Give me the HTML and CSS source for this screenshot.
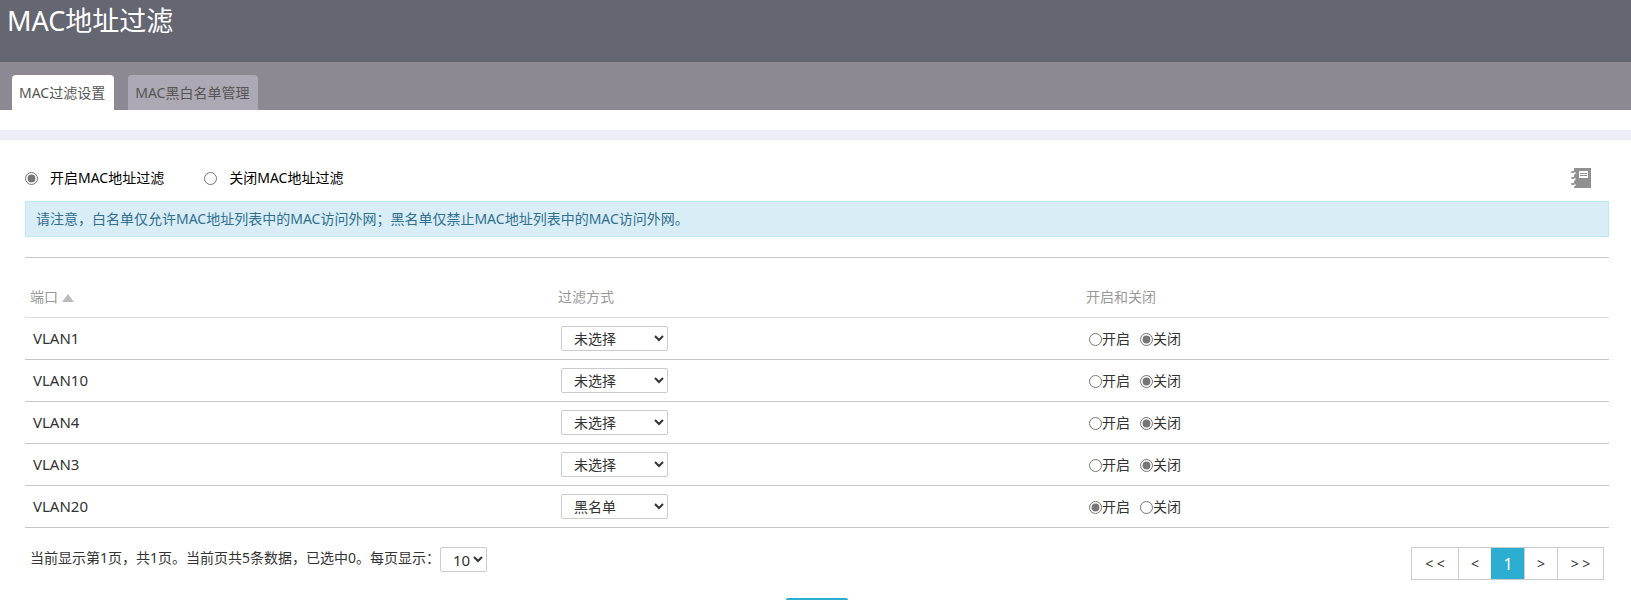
FILE: index.html
```
<!DOCTYPE html>
<html lang="zh-CN">
<head>
    <meta charset="UTF-8">
    <meta name="viewport" content="width=device-width, initial-scale=1.0">
    <title>MAC地址过滤</title>
    <link rel="stylesheet" href="styles.css">
</head>
<body>
    <header class="page-header">
        <h1>MAC地址过滤</h1>
    </header>
    <nav class="tabs">
        <a href="#" class="tab active">MAC过滤设置</a>
        <a href="#" class="tab">MAC黑白名单管理</a>
    </nav>
    <main class="content">
        <div class="toolbar">
            <label class="switch"><input type="radio" name="macFilter" checked>开启MAC地址过滤</label>
            <label class="switch"><input type="radio" name="macFilter">关闭MAC地址过滤</label>
            <button type="button" class="help-btn" aria-label="帮助">
                <svg width="20" height="20" viewBox="0 0 20 20">
                    <path fill="#909090" d="M3 0h17v20H3v-1l2-2-2-2v-2l2-2-2-2V7l2-2-2-2z"/>
                    <g fill="#909090">
                        <ellipse cx="2" cy="4" rx="2" ry="1"/>
                        <ellipse cx="2" cy="10" rx="2" ry="1"/>
                        <ellipse cx="2" cy="16" rx="2" ry="1"/>
                    </g>
                    <path fill="#fff" d="M8 3h9v7H8z"/>
                    <path fill="#909090" d="M9 5h7v1H9zM9 7h7v1H9z"/>
                </svg>
            </button>
        </div>
        <div class="notice">请注意，白名单仅允许MAC地址列表中的MAC访问外网；黑名单仅禁止MAC地址列表中的MAC访问外网。</div>
        <table class="port-table">
            <thead>
                <tr>
                    <th>端口<span class="sort-up"></span></th>
                    <th>过滤方式</th>
                    <th>开启和关闭</th>
                </tr>
            </thead>
            <tbody>
                <tr>
                    <td>VLAN1</td>
                    <td><select class="mode" aria-label="VLAN1 过滤方式"><option>未选择</option><option>白名单</option><option>黑名单</option></select></td>
                    <td><div class="radios"><label><input type="radio" name="vlan1">开启</label><label><input type="radio" name="vlan1" checked>关闭</label></div></td>
                </tr>
                <tr>
                    <td>VLAN10</td>
                    <td><select class="mode" aria-label="VLAN10 过滤方式"><option>未选择</option><option>白名单</option><option>黑名单</option></select></td>
                    <td><div class="radios"><label><input type="radio" name="vlan10">开启</label><label><input type="radio" name="vlan10" checked>关闭</label></div></td>
                </tr>
                <tr>
                    <td>VLAN4</td>
                    <td><select class="mode" aria-label="VLAN4 过滤方式"><option>未选择</option><option>白名单</option><option>黑名单</option></select></td>
                    <td><div class="radios"><label><input type="radio" name="vlan4">开启</label><label><input type="radio" name="vlan4" checked>关闭</label></div></td>
                </tr>
                <tr>
                    <td>VLAN3</td>
                    <td><select class="mode" aria-label="VLAN3 过滤方式"><option>未选择</option><option>白名单</option><option>黑名单</option></select></td>
                    <td><div class="radios"><label><input type="radio" name="vlan3">开启</label><label><input type="radio" name="vlan3" checked>关闭</label></div></td>
                </tr>
                <tr>
                    <td>VLAN20</td>
                    <td><select class="mode" aria-label="VLAN20 过滤方式"><option>未选择</option><option>白名单</option><option selected>黑名单</option></select></td>
                    <td><div class="radios"><label><input type="radio" name="vlan20" checked>开启</label><label><input type="radio" name="vlan20">关闭</label></div></td>
                </tr>
            </tbody>
        </table>
        <div class="table-footer">
            <div class="page-info">
                <label for="pageSize">当前显示第1页，共1页。当前页共5条数据，已选中0。每页显示：</label>
                <select id="pageSize" class="page-size"><option>10</option><option>20</option><option>50</option></select>
            </div>
            <div class="pager">
                <button type="button" class="wide">&lt; &lt;</button>
                <button type="button">&lt;</button>
                <button type="button" class="current">1</button>
                <button type="button">&gt;</button>
                <button type="button" class="wide">&gt; &gt;</button>
            </div>
        </div>
        <div class="actions">
            <button type="button" class="btn" aria-label="保存"></button>
        </div>
    </main>
</body>
</html>
```

FILE: styles.css
```
* {
    box-sizing: border-box;
}
body {
    margin: 0;
    font-family: "Noto Sans", "Noto Sans CJK SC", sans-serif;
    font-size: 14px;
    line-height: 20px;
    color: #333;
    background-color: #fff;
}
button, select {
    font-family: inherit;
    font-size: 14px;
    color: #333;
}
input[type="radio"] {
    accent-color: #767676;
}
.page-header {
    height: 62px;
    padding: 2px 7px;
    background-color: #646672;
}
.page-header h1 {
    margin: 0;
    font-size: 27px;
    font-weight: normal;
    line-height: 38px;
    color: #fff;
}
.tabs {
    display: flex;
    gap: 14px;
    height: 48px;
    padding: 13px 12px 0;
    background-color: #8c8993;
}
.tab {
    padding: 0 9px 0 7px;
    line-height: 36px;
    color: #555;
    text-decoration: none;
    background-color: #aca9b4;
    border-radius: 4px 4px 0 0;
}
.tab.active {
    background-color: #fff;
}
.content {
    margin-top: 20px;
    padding: 24px 22px 0 25px;
    border-top: 10px solid #eeeef8;
}
.toolbar {
    display: flex;
    align-items: center;
    height: 28px;
    margin-bottom: 9px;
    color: #000;
}
.switch {
    display: flex;
    align-items: center;
    margin-right: 40px;
}
.switch input {
    margin: 0 12px 0 0;
}
.help-btn {
    display: flex;
    margin-left: auto;
    margin-right: 18px;
    padding: 0;
    border: none;
    background: none;
    cursor: pointer;
}
.notice {
    padding: 7px 10px;
    color: #31708f;
    background-color: #d9edf7;
    border: 1px solid #bce8f1;
}
.port-table {
    width: 100%;
    margin-top: 20px;
    border-top: 1px solid #c8c8c8;
    border-spacing: 0;
    table-layout: fixed;
}
.port-table th {
    height: 60px;
    padding: 18px 5px 0;
    font-weight: normal;
    text-align: left;
    color: #999;
    border-bottom: 1px solid #ddd;
}
.port-table td {
    height: 42px;
    padding: 0 8px;
    border-bottom: 1px solid #c8c8c8;
}
.port-table td:first-child {
    padding-bottom: 2px;
    font-size: 15px;
}
.sort-up {
    display: inline-block;
    margin-left: 4px;
    border: 6px solid transparent;
    border-top: none;
    border-bottom: 8px solid #bbb;
}
select {
    height: 25px;
    background-color: #fff;
    border: 1px solid #ccc;
    border-radius: 2px;
}
.mode {
    display: block;
    width: 107px;
    padding: 0 0 0 8px;
}
.radios {
    display: flex;
    gap: 10px;
}
.radios label {
    display: flex;
    align-items: center;
}
.radios input {
    margin: 2px 0 0;
}
.table-footer {
    display: flex;
    justify-content: space-between;
    padding: 19px 5px 18px;
}
.page-info {
    display: flex;
    align-items: flex-start;
}
.page-info label {
    line-height: 22px;
}
.page-size {
    width: 47px;
    padding: 0 0 0 8px;
    font-size: 15px;
}
.pager {
    display: flex;
    border: 1px solid #ccc;
}
.pager button {
    width: 33px;
    height: 31px;
    padding: 0;
    background-color: #fff;
    border: none;
    border-left: 1px solid #ccc;
    cursor: pointer;
}
.pager button:first-child {
    border-left: none;
}
.pager .wide {
    width: 46px;
}
.pager .current {
    font-size: 16px;
    color: #fff;
    background-color: #2baed1;
    border-color: #2baed1;
}
.actions {
    display: flex;
    justify-content: center;
}
.btn {
    width: 62px;
    height: 32px;
    color: #fff;
    background-color: #2baed1;
    border: none;
    border-radius: 2px;
}
```
